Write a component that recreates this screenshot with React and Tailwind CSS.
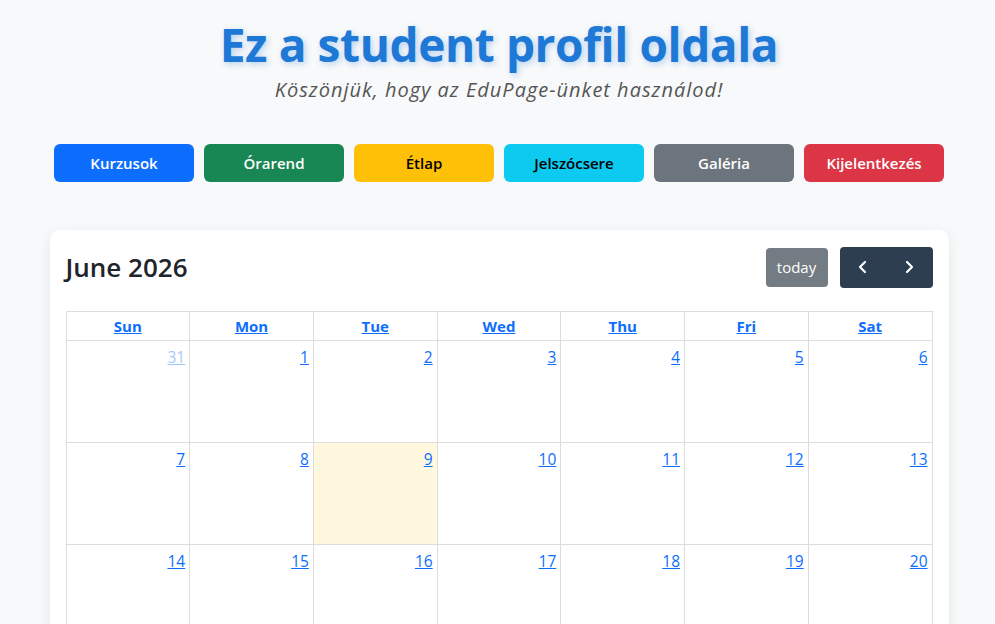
import { useState } from 'react';

const buttons = [
    { label: "Kurzusok", cls: "bg-[#0d6efd] text-white" },
    { label: "Órarend", cls: "bg-[#198754] text-white" },
    { label: "Étlap", cls: "bg-[#ffc107] text-black" },
    { label: "Jelszócsere", cls: "bg-[#0dcaf0] text-black" },
    { label: "Galéria", cls: "bg-[#6c757d] text-white" },
    { label: "Kijelentkezés", cls: "bg-[#dc3545] text-white" },
];

const dayNames = ["Sun", "Mon", "Tue", "Wed", "Thu", "Fri", "Sat"];

// June 2026 starts on a Monday, so the grid opens with May 31
const weeks = [
    [{ d: 31, other: true }, { d: 1 }, { d: 2 }, { d: 3 }, { d: 4 }, { d: 5 }, { d: 6 }],
    [{ d: 7 }, { d: 8 }, { d: 9, today: true }, { d: 10 }, { d: 11 }, { d: 12 }, { d: 13 }],
    [{ d: 14 }, { d: 15 }, { d: 16 }, { d: 17 }, { d: 18 }, { d: 19 }, { d: 20 }],
];

export default function App() {
    const [month] = useState("June 2026");

    return (
        <div className="min-h-[624px] bg-[#f8f9fa] pl-[3px] font-['Open_Sans',sans-serif] text-[#212529]">
            <div className="pt-[14px] text-center">
                <h1 className="text-[46px] leading-[60px] font-bold text-[#1e78d6] tracking-[-0.4px] [text-shadow:2px_2px_6px_rgba(30,120,214,0.3)]">
                    Ez a student profil oldala
                </h1>
                <p className="mt-[1px] text-[20px] italic text-[#555] tracking-[1px]">
                    Köszönjük, hogy az EduPage-ünket használod!
                </p>
            </div>

            <div className="mt-[39px] flex justify-center gap-[10px]">
                {buttons.map((b) => (
                    <button
                        key={b.label}
                        className={`w-[140px] h-[38px] rounded-[6px] text-[15px] font-semibold ${b.cls}`}
                    >
                        {b.label}
                    </button>
                ))}
            </div>

            <div className="mx-auto mt-[48px] w-[899px] rounded-[10px] bg-white p-[16px] shadow-[0_4px_14px_rgba(0,0,0,0.08)]">
                <div className="flex items-center justify-between h-[42px]">
                    <h2 className="text-[26px] font-semibold text-[#212529]">{month}</h2>
                    <div className="flex items-center gap-[12px]">
                        <button className="h-[39px] w-[62px] rounded-[4px] bg-[#6c757d] text-[15px] text-white opacity-95">
                            today
                        </button>
                        <div className="flex h-[41px] w-[93px] rounded-[4px] bg-[#2c3e50] text-white">
                            <button className="flex-1 flex items-center justify-center">
                                <svg width="14" height="14" viewBox="0 0 14 14" fill="none" stroke="currentColor" strokeWidth="2.2" strokeLinecap="round" strokeLinejoin="round">
                                    <path d="M9 2 L4 7 L9 12" />
                                </svg>
                            </button>
                            <button className="flex-1 flex items-center justify-center">
                                <svg width="14" height="14" viewBox="0 0 14 14" fill="none" stroke="currentColor" strokeWidth="2.2" strokeLinecap="round" strokeLinejoin="round">
                                    <path d="M5 2 L10 7 L5 12" />
                                </svg>
                            </button>
                        </div>
                    </div>
                </div>

                <table className="mt-[23px] w-full table-fixed border-collapse">
                    <thead>
                        <tr>
                            {dayNames.map((n) => (
                                <th key={n} className="h-[29px] border border-[#dddddd] text-[15px] font-bold">
                                    <a className="text-[#0d6efd] underline cursor-pointer">{n}</a>
                                </th>
                            ))}
                        </tr>
                    </thead>
                    <tbody>
                        {weeks.map((w, i) => (
                            <tr key={i}>
                                {w.map((c) => (
                                    <td
                                        key={c.d}
                                        className={`h-[102px] border border-[#dddddd] align-top text-right px-[4px] pt-[4px] ${c.today ? "bg-[#fff8df]" : ""}`}
                                    >
                                        <a className={`text-[15.5px] underline cursor-pointer ${c.other ? "text-[#0d6efd]/40" : "text-[#0d6efd]"}`}>
                                            {c.d}
                                        </a>
                                    </td>
                                ))}
                            </tr>
                        ))}
                    </tbody>
                </table>
            </div>
        </div>
    );
}
